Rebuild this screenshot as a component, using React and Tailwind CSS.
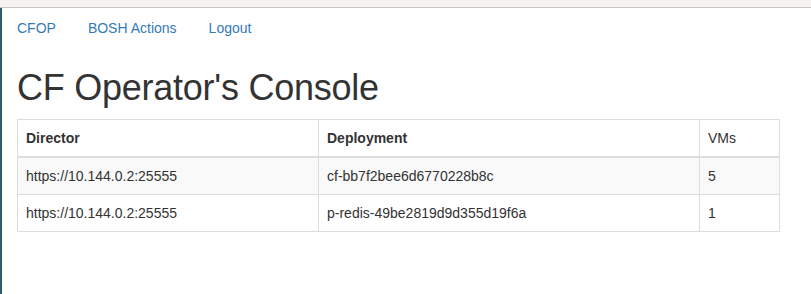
const rows = [
  { director: 'https://10.144.0.2:25555', deployment: 'cf-bb7f2bee6d6770228b8c', vms: 5 },
  { director: 'https://10.144.0.2:25555', deployment: 'p-redis-49be2819d9d355d19f6a', vms: 1 },
];

const links = ['CFOP', 'BOSH Actions', 'Logout'];

export default function App() {
  return (
    <div className="min-h-[294px] bg-white font-['Liberation_Sans',Arial,sans-serif] text-[14px] leading-[20px] text-[#333]">
      <div className="h-[8px] bg-[#f5f4f2] border-b border-[#c9c6c1]" />
      <div className="flex min-h-[286px]">
        <div className="w-[2px] bg-[#2e5b6c]" />
        <div className="flex-1 px-[15px]">
          <ul className="flex -ml-[15px]">
            {links.map((l, i) => (
              <li key={l} className={i > 0 ? 'ml-[2px]' : ''}>
                <a href="#" className="block px-[15px] py-[10px] text-[#337ab7]">
                  {l}
                </a>
              </li>
            ))}
          </ul>
          <h1 className="mt-[20px] mb-[11px] text-[36px] leading-[1.1] font-normal tracking-[-0.25px] text-[#333]">
            CF Operator's Console
          </h1>
          <table className="w-[763px] border-collapse border border-[#ddd]">
            <thead>
              <tr>
                <th className="w-[301px] text-left font-bold p-[8px] border border-[#ddd] border-b-2">Director</th>
                <th className="w-[381px] text-left font-bold p-[8px] border border-[#ddd] border-b-2">Deployment</th>
                <td className="text-left p-[8px] border border-[#ddd] border-b-2">VMs</td>
              </tr>
            </thead>
            <tbody>
              {rows.map((r, i) => (
                <tr key={r.deployment} className={i % 2 === 0 ? 'bg-[#f9f9f9]' : ''}>
                  <td className="p-[8px] border border-[#ddd]">{r.director}</td>
                  <td className="p-[8px] border border-[#ddd]">{r.deployment}</td>
                  <td className="p-[8px] border border-[#ddd]">{r.vms}</td>
                </tr>
              ))}
            </tbody>
          </table>
        </div>
      </div>
    </div>
  );
}
